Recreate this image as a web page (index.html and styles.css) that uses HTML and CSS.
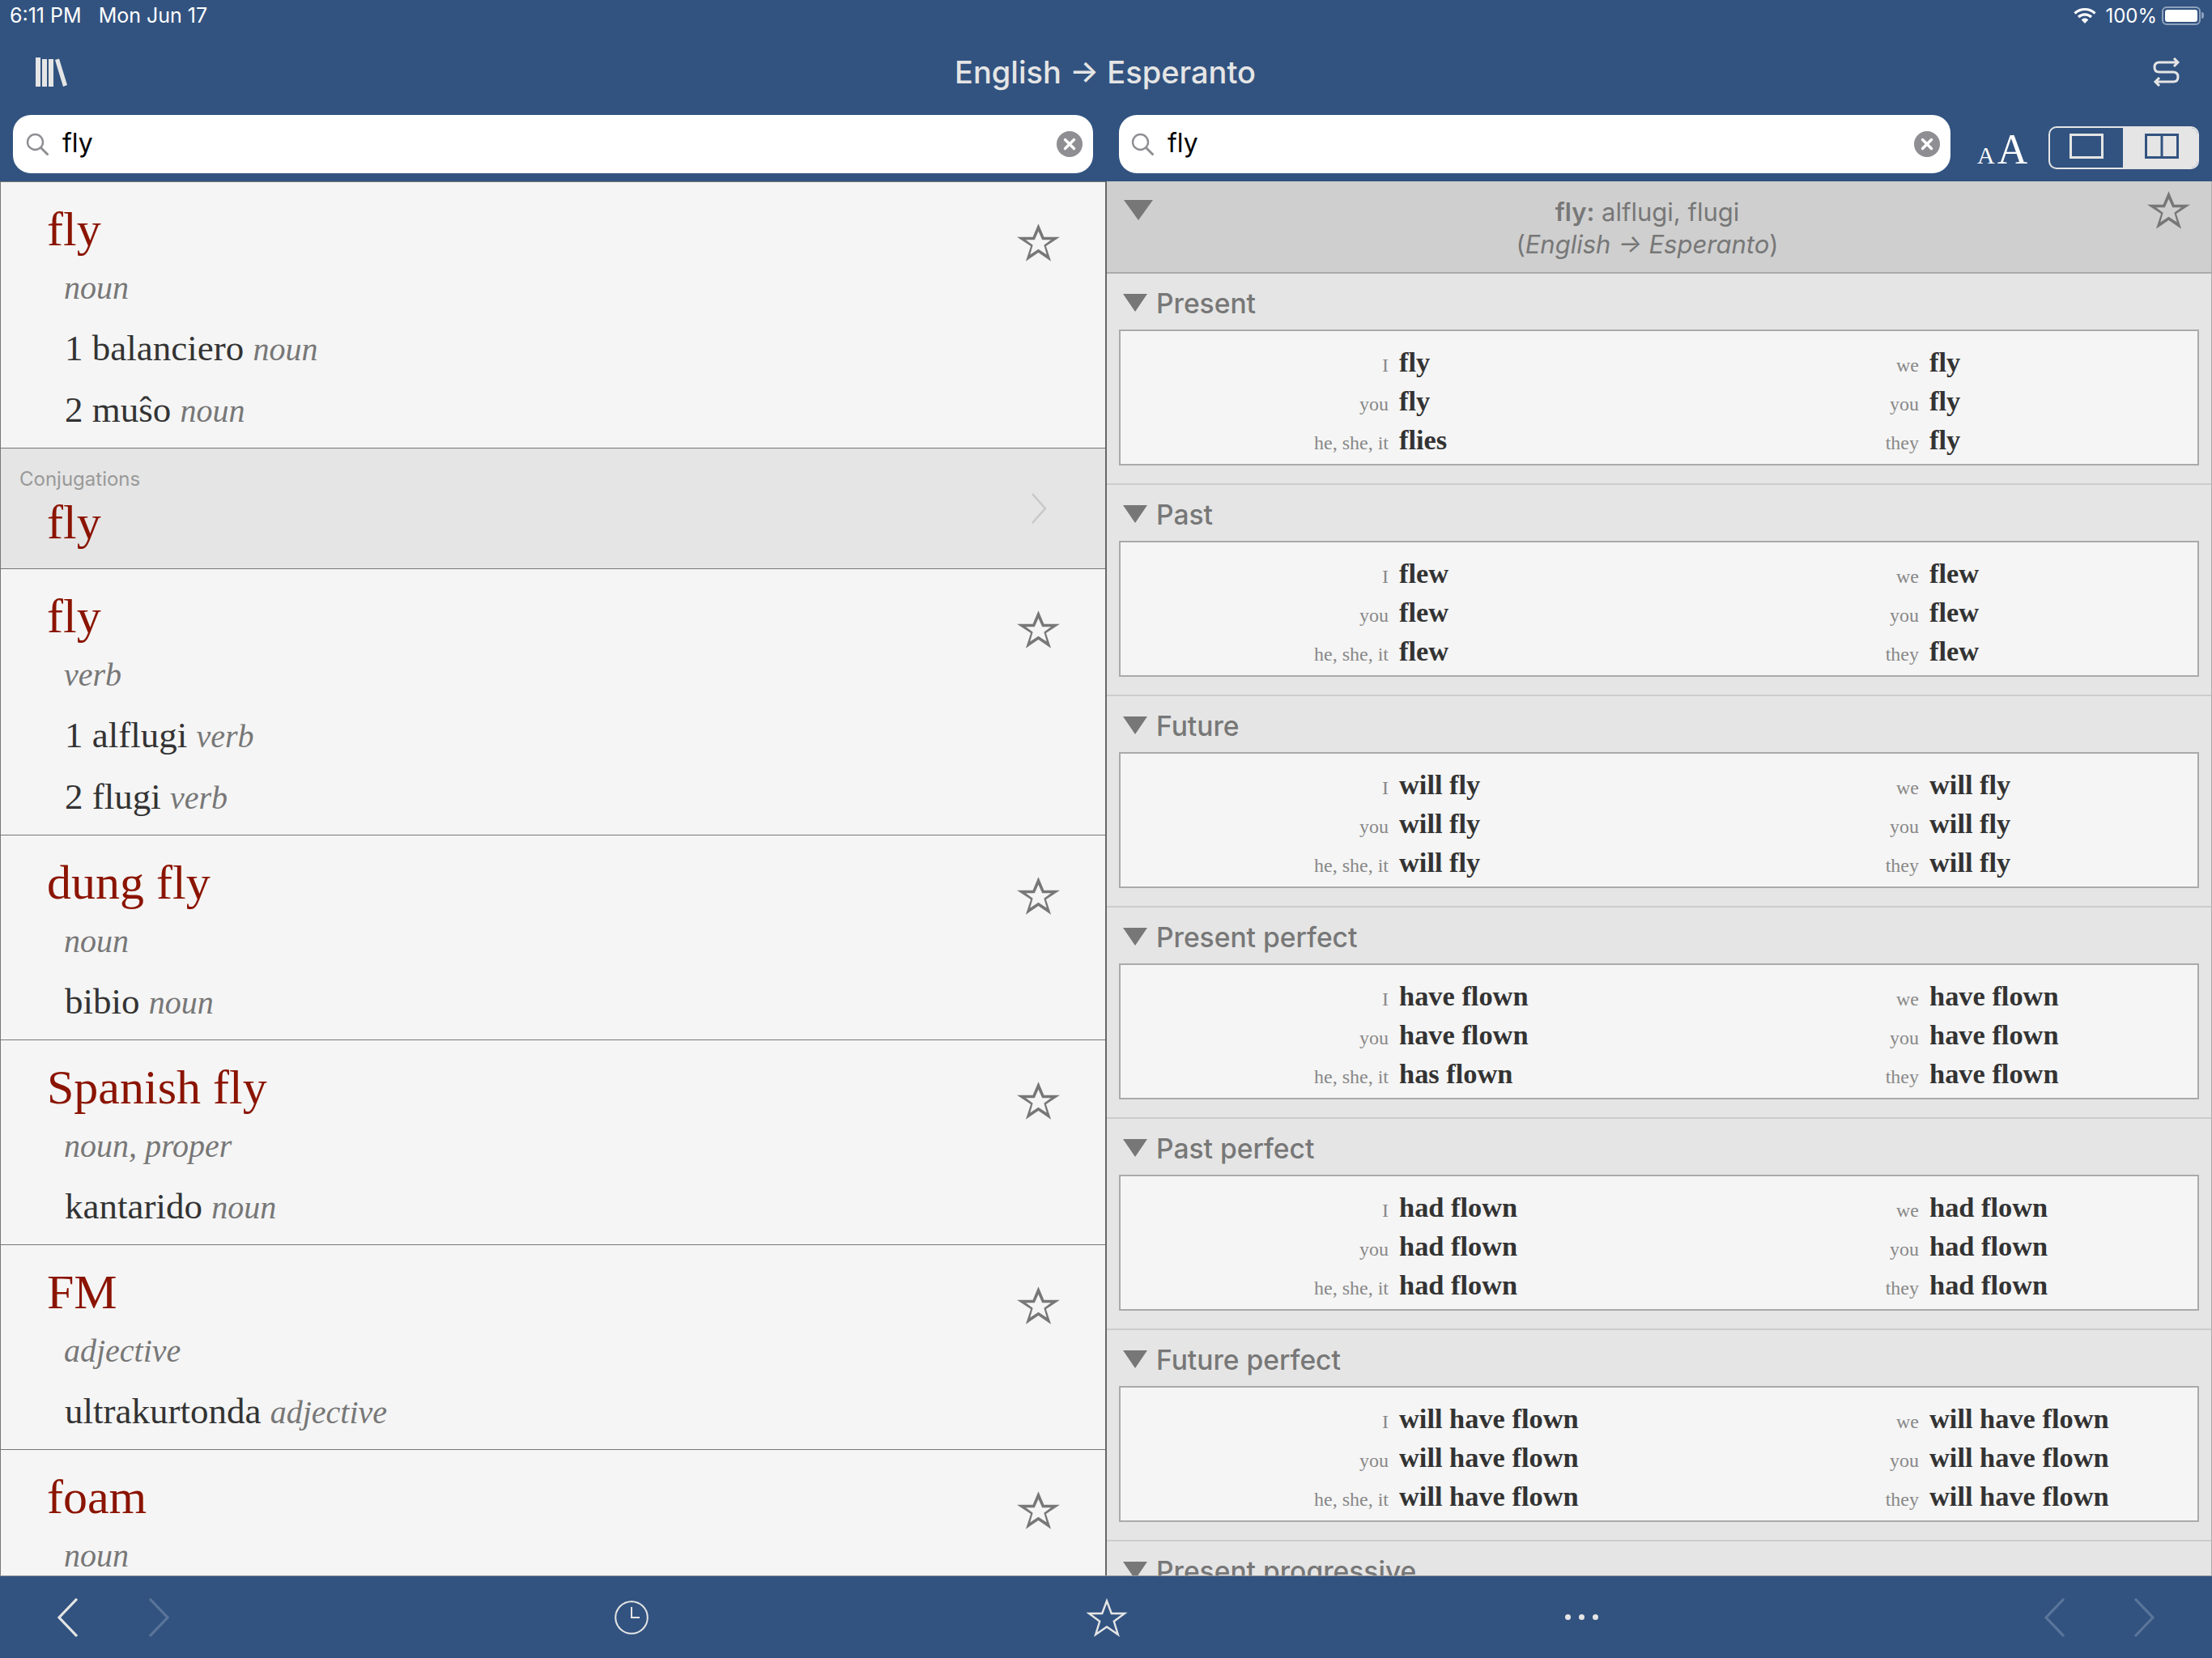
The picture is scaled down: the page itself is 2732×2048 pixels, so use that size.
FILE: index.html
```html
<!DOCTYPE html>
<html lang="en">
<head>
<meta charset="utf-8">
<title>English → Esperanto</title>
<link rel="stylesheet" href="styles.css">
</head>
<body>
<svg class="defs" width="0" height="0" aria-hidden="true">
  <symbol id="star" viewBox="0 0 53.4 46.8"><path fill-rule="evenodd" d="M26.7 0L33.7 16.7H53.4L36.2 28L42.4 46.8L26.7 36L11 46.8L17.2 28L0 16.7H19.7ZM26.7 9.5L22 20H11L19.8 26.6L16.4 38.6L26.7 31.6L37 38.6L33.6 26.6L42.4 20H31.4Z"/></symbol>
  <symbol id="glass" viewBox="0 0 28 28"><circle cx="11.5" cy="11.5" r="9.5" fill="none" stroke="currentColor" stroke-width="2.4"/><path d="M18.5 18.5L26.5 26.5" stroke="currentColor" stroke-width="3" stroke-linecap="round"/></symbol>
  <symbol id="clear" viewBox="0 0 32 32"><circle cx="16" cy="16" r="16" fill="#8e8e93"/><path d="M10.5 10.5L21.5 21.5M21.5 10.5L10.5 21.5" stroke="#fff" stroke-width="3.4" stroke-linecap="round"/></symbol>
  <symbol id="star-line" viewBox="0 0 52 48"><path fill="none" stroke="currentColor" stroke-width="2.4" stroke-miterlimit="10" d="M26 3.5L31.8 19H48L34.8 28.8L39.8 45L26 35.5L12.2 45L17.2 28.8L4 19H20.2Z"/></symbol>
</svg>

<div class="app">
  <header class="top">
    <div class="status">
      <div class="status-left"><span>6:11 PM</span><span>Mon Jun 17</span></div>
      <div class="status-right">
        <svg class="wifi" viewBox="0 0 28 20" width="28" height="20"><path d="M1.5 7.5C8.5 .8 19.5 .8 26.5 7.5" fill="none" stroke="#fff" stroke-width="3.2"/><path d="M6 12C10.8 7.8 17.2 7.8 22 12" fill="none" stroke="#fff" stroke-width="3.2"/><path d="M9.8 15.4C12.4 13 15.6 13 18.2 15.4L14 20Z" fill="#fff"/></svg>
        <span class="pct">100%</span>
        <span class="battery"><span class="battery-fill"></span></span><span class="battery-nub"></span>
      </div>
    </div>
    <div class="nav">
      <svg class="lib" viewBox="0 0 39 36" width="39" height="36"><path fill="#e5e5e5" d="M0 0H6V36H0ZM8 2H14V36H8ZM16 2H22V36H16ZM24 3L29 1.5L39 34L34 36Z"/></svg>
      <div class="nav-title">English → Esperanto</div>
      <svg class="swap" viewBox="0 0 33 36" width="33" height="36"><path fill="none" stroke="#e5e5e5" stroke-width="3" d="M30 6H8Q2 6 2 12T8 18H25Q31 18 31 24T25 30H4M26 1L31 6L26 11M8 25L3 30L8 35"/></svg>
    </div>
    <div class="tools">
      <div class="search search-left">
        <svg class="glass"><use href="#glass"/></svg><span class="query">fly</span><svg class="clear"><use href="#clear"/></svg>
      </div>
      <div class="search search-right">
        <svg class="glass"><use href="#glass"/></svg><span class="query">fly</span><svg class="clear"><use href="#clear"/></svg>
      </div>
      <div class="aa"><span class="aa-s">A</span><span class="aa-l">A</span></div>
      <div class="seg">
        <div class="seg-a"><svg viewBox="0 0 42 31" width="42" height="31"><rect x="1.5" y="1.5" width="39" height="28" fill="none" stroke="#e5e5e5" stroke-width="3"/></svg></div>
        <div class="seg-b"><svg viewBox="0 0 42 31" width="42" height="31"><path d="M1.5 1.5H40.5V29.5H1.5ZM21 1.5V29.5" fill="none" stroke="#325380" stroke-width="3"/></svg></div>
      </div>
    </div>
  </header>

  <main class="panes">
    <section class="list">
      <article class="entry">
        <div class="entry-body">
          <h2 class="word">fly</h2>
          <p class="pos">noun</p>
          <p class="sense"><span class="n">1</span> balanciero <i>noun</i></p>
          <p class="sense"><span class="n">2</span> muŝo <i>noun</i></p>
        </div>
        <svg class="star"><use href="#star"/></svg>
      </article>
      <article class="conj-link">
        <div>
          <div class="conj-label">Conjugations</div>
          <h2 class="word word-conj">fly</h2>
        </div>
        <svg class="chev" viewBox="0 0 20 38" width="20" height="38"><path d="M2 1L18 19L2 37" fill="none" stroke="#c8c8c8" stroke-width="2.5"/></svg>
      </article>
      <article class="entry">
        <div class="entry-body">
          <h2 class="word">fly</h2>
          <p class="pos">verb</p>
          <p class="sense"><span class="n">1</span> alflugi <i>verb</i></p>
          <p class="sense"><span class="n">2</span> flugi <i>verb</i></p>
        </div>
        <svg class="star"><use href="#star"/></svg>
      </article>
      <article class="entry">
        <div class="entry-body">
          <h2 class="word">dung fly</h2>
          <p class="pos">noun</p>
          <p class="sense">bibio <i>noun</i></p>
        </div>
        <svg class="star"><use href="#star"/></svg>
      </article>
      <article class="entry">
        <div class="entry-body">
          <h2 class="word">Spanish fly</h2>
          <p class="pos">noun, proper</p>
          <p class="sense">kantarido <i>noun</i></p>
        </div>
        <svg class="star"><use href="#star"/></svg>
      </article>
      <article class="entry">
        <div class="entry-body">
          <h2 class="word">FM</h2>
          <p class="pos">adjective</p>
          <p class="sense">ultrakurtonda <i>adjective</i></p>
        </div>
        <svg class="star"><use href="#star"/></svg>
      </article>
      <article class="entry">
        <div class="entry-body">
          <h2 class="word">foam</h2>
          <p class="pos">noun</p>
        </div>
        <svg class="star"><use href="#star"/></svg>
      </article>
    </section>

    <section class="detail">
      <div class="detail-head">
        <span class="tri tri-head"></span>
        <div class="detail-title"><div><b>fly:</b> alflugi, flugi</div><div>(<i>English → Esperanto</i>)</div></div>
        <svg class="star star-head"><use href="#star"/></svg>
      </div>

      <div class="tense">
        <h3 class="tense-name"><span class="tri"></span>Present</h3>
        <div class="conj-box">
          <span class="pr">I</span><b>fly</b><span class="pr">we</span><b>fly</b>
          <span class="pr">you</span><b>fly</b><span class="pr">you</span><b>fly</b>
          <span class="pr">he, she, it</span><b>flies</b><span class="pr">they</span><b>fly</b>
        </div>
      </div>
      <div class="tense">
        <h3 class="tense-name"><span class="tri"></span>Past</h3>
        <div class="conj-box">
          <span class="pr">I</span><b>flew</b><span class="pr">we</span><b>flew</b>
          <span class="pr">you</span><b>flew</b><span class="pr">you</span><b>flew</b>
          <span class="pr">he, she, it</span><b>flew</b><span class="pr">they</span><b>flew</b>
        </div>
      </div>
      <div class="tense">
        <h3 class="tense-name"><span class="tri"></span>Future</h3>
        <div class="conj-box">
          <span class="pr">I</span><b>will fly</b><span class="pr">we</span><b>will fly</b>
          <span class="pr">you</span><b>will fly</b><span class="pr">you</span><b>will fly</b>
          <span class="pr">he, she, it</span><b>will fly</b><span class="pr">they</span><b>will fly</b>
        </div>
      </div>
      <div class="tense">
        <h3 class="tense-name"><span class="tri"></span>Present perfect</h3>
        <div class="conj-box">
          <span class="pr">I</span><b>have flown</b><span class="pr">we</span><b>have flown</b>
          <span class="pr">you</span><b>have flown</b><span class="pr">you</span><b>have flown</b>
          <span class="pr">he, she, it</span><b>has flown</b><span class="pr">they</span><b>have flown</b>
        </div>
      </div>
      <div class="tense">
        <h3 class="tense-name"><span class="tri"></span>Past perfect</h3>
        <div class="conj-box">
          <span class="pr">I</span><b>had flown</b><span class="pr">we</span><b>had flown</b>
          <span class="pr">you</span><b>had flown</b><span class="pr">you</span><b>had flown</b>
          <span class="pr">he, she, it</span><b>had flown</b><span class="pr">they</span><b>had flown</b>
        </div>
      </div>
      <div class="tense">
        <h3 class="tense-name"><span class="tri"></span>Future perfect</h3>
        <div class="conj-box">
          <span class="pr">I</span><b>will have flown</b><span class="pr">we</span><b>will have flown</b>
          <span class="pr">you</span><b>will have flown</b><span class="pr">you</span><b>will have flown</b>
          <span class="pr">he, she, it</span><b>will have flown</b><span class="pr">they</span><b>will have flown</b>
        </div>
      </div>
      <div class="tense">
        <h3 class="tense-name"><span class="tri"></span>Present progressive</h3>
      </div>
    </section>
  </main>

  <footer class="bottom">
    <div class="bottom-nav">
      <svg viewBox="0 0 28 48" width="28" height="48"><path d="M25 1L3 24L25 47" fill="none" stroke="#e5e5e5" stroke-width="3.2"/></svg>
      <svg class="dim" viewBox="0 0 28 48" width="28" height="48"><path d="M3 1L25 24L3 47" fill="none" stroke="#5a7599" stroke-width="3.2"/></svg>
    </div>
    <svg class="clock" viewBox="0 0 42 42" width="42" height="42"><circle cx="21" cy="21" r="19.8" fill="none" stroke="#e5e5e5" stroke-width="2"/><path d="M21 8V21H31" fill="none" stroke="#e5e5e5" stroke-width="2"/></svg>
    <svg class="star-bottom"><use href="#star-line"/></svg>
    <div class="dots"><span></span><span></span><span></span></div>
    <div class="bottom-nav bottom-nav-right">
      <svg viewBox="0 0 28 48" width="28" height="48"><path d="M25 1L3 24L25 47" fill="none" stroke="#5a7599" stroke-width="3.2"/></svg>
      <svg viewBox="0 0 28 48" width="28" height="48"><path d="M3 1L25 24L3 47" fill="none" stroke="#5a7599" stroke-width="3.2"/></svg>
    </div>
  </footer>
</div>
</body>
</html>
```
FILE: styles.css
```css
* { box-sizing: border-box; }
html, body { margin: 0; padding: 0; }
body { width: 2732px; height: 2048px; overflow: hidden; background: #325380; font-family: Inter, "Liberation Sans", sans-serif; }
.defs { position: absolute; }
.app { width: 2732px; height: 2048px; display: flex; flex-direction: column; }

/* header */
.top { height: 224px; background: #325380; flex: none; }
.status { height: 40px; display: flex; justify-content: space-between; align-items: center; padding: 0 10px 2px 12px; color: #fff; font-size: 25px; }
.status-left { display: flex; gap: 21px; }
.status-right { display: flex; align-items: center; font-size: 24px; }
.wifi { margin-right: 11px; }
.pct { margin-right: 6px; }
.battery { width: 48px; height: 23px; border: 2px solid #8ea2bd; border-radius: 6px; padding: 2px; display: block; }
.battery-fill { display: block; height: 100%; background: #fff; border-radius: 3px; }
.battery-nub { width: 3px; height: 8px; background: #8ea2bd; border-radius: 0 3px 3px 0; margin-left: 1px; }
.nav { height: 102px; display: flex; justify-content: space-between; align-items: center; padding: 0 40px 4px 44px; color: #e5e5e5; }
.nav-title { font-size: 38px; font-weight: 500; margin-right: 12px; }
.tools { display: flex; align-items: flex-start; padding-left: 16px; }
.search { height: 72px; background: #fff; border-radius: 22px; display: flex; align-items: center; color: #000; font-size: 32px; }
.search-left { width: 1334px; margin-right: 32px; padding: 0 13px 0 16px; }
.search-right { width: 1027px; margin-right: 33px; padding: 0 13px 0 15px; }
.glass { width: 28px; height: 28px; color: #8e8e93; flex: none; }
.query { margin: 0 0 3px 17px; flex: 1; }
.clear { width: 32px; height: 32px; flex: none; }
.aa { width: 88px; height: 64px; margin-top: 11px; display: flex; align-items: baseline; gap: 3px; font-family: "Liberation Serif", serif; color: #fff; line-height: 64px; }
.aa-s { font-size: 30px; }
.aa-l { font-size: 52px; }
.seg { width: 186px; height: 53px; margin-top: 14px; border: 2px solid #e5e5e5; border-radius: 10px; display: flex; overflow: hidden; }
.seg-a, .seg-b { display: flex; align-items: center; justify-content: center; height: 100%; }
.seg-a { width: 90px; padding-bottom: 4px; }
.seg-b { flex: 1; background: #e5e5e5; padding: 0 0 4px 3px; }

/* panes */
.panes { flex: 1; display: flex; min-height: 0; overflow: hidden; background: #f5f5f5; }
.list { width: 1365px; flex: none; border-left: 1px solid #777; border-top: 1px solid #777; overflow: hidden; }
.entry { display: flex; justify-content: space-between; align-items: flex-start; padding: 24px 56px 9px 0; border-bottom: 1px solid #777; background: #f5f5f5; }
.word { margin: 0; padding-left: 57px; height: 69px; font: 400 60px/69px "Liberation Serif", serif; color: #8b1400; }
.pos { margin: 0; padding-left: 78px; height: 74px; font: italic 400 40px/75px "Liberation Serif", serif; color: #777; }
.sense { margin: 0; padding-left: 79px; height: 76px; font: 400 45px/76px "Liberation Serif", serif; color: #333; }
.sense i { font-size: 40px; color: #777; }
.star { width: 53px; height: 47px; fill: #777; flex: none; margin-top: 27px; }
.conj-link { height: 149px; display: flex; justify-content: space-between; align-items: center; padding-right: 72px; background: #e5e5e5; border-bottom: 1px solid #777; }
.conj-label { padding: 23px 0 0 23px; height: 55px; font-size: 24px; line-height: 30px; color: #999; }
.word-conj { height: 93px; line-height: 72px; }

/* detail */
.detail { flex: 1; min-width: 0; background: #e5e5e5; border-left: 2px solid #666; border-right: 1px solid #aaa; overflow: hidden; }
.detail-head { height: 114px; background: #cfcfcf; border-bottom: 2px solid #aaa; display: flex; align-items: flex-start; padding: 23px 26px 0 21px; }
.tri { width: 0; height: 0; flex: none; border-style: solid; border-width: 22px 15px 0; border-color: #777 transparent transparent; }
.tri-head { border-width: 25px 18px 0; }
.detail-title { flex: 1; margin-top: -5px; margin-right: 7px; text-align: center; font-size: 31px; line-height: 40px; color: #777; }
.detail-title b { font-weight: 600; }
.star-head { margin-top: -11px; }
.tense { height: 261px; border-bottom: 2px solid #ccc; }
.tense-name { margin: 0; height: 69px; display: flex; align-items: center; gap: 11px; padding: 3px 0 0 20px; font-size: 33.6px; font-weight: 500; color: #777; }
.conj-box { margin: 0 15px; height: 168px; padding: 14px 0 6px; background: #f5f5f5; border: 2px solid #aaa; display: grid; grid-template-columns: 344px 311px 344px 1fr; grid-auto-rows: 48px; align-items: baseline; font-family: "Liberation Serif", serif; line-height: 48px; }
.conj-box b { font-size: 34.4px; font-weight: 700; color: #333; }
.pr { font-size: 24px; color: #888; text-align: right; padding-right: 13px; }

/* bottom */
.bottom { height: 102px; flex: none; background: #325380; border-top: 1px solid #999; display: flex; align-items: center; }
.bottom-nav { width: 215px; display: flex; gap: 84px; padding-left: 70px; margin-right: 544px; flex: none; }
.clock { flex: none; margin-right: 540px; }
.star-bottom { width: 52px; height: 48px; color: #e5e5e5; flex: none; margin-right: 540px; }
.dots { display: flex; gap: 10px; margin-right: 550px; flex: none; }
.dots span { width: 7px; height: 7px; border-radius: 50%; background: #e5e5e5; }
.bottom-nav-right { width: auto; padding: 0; margin: 0; gap: 82px; }
```
